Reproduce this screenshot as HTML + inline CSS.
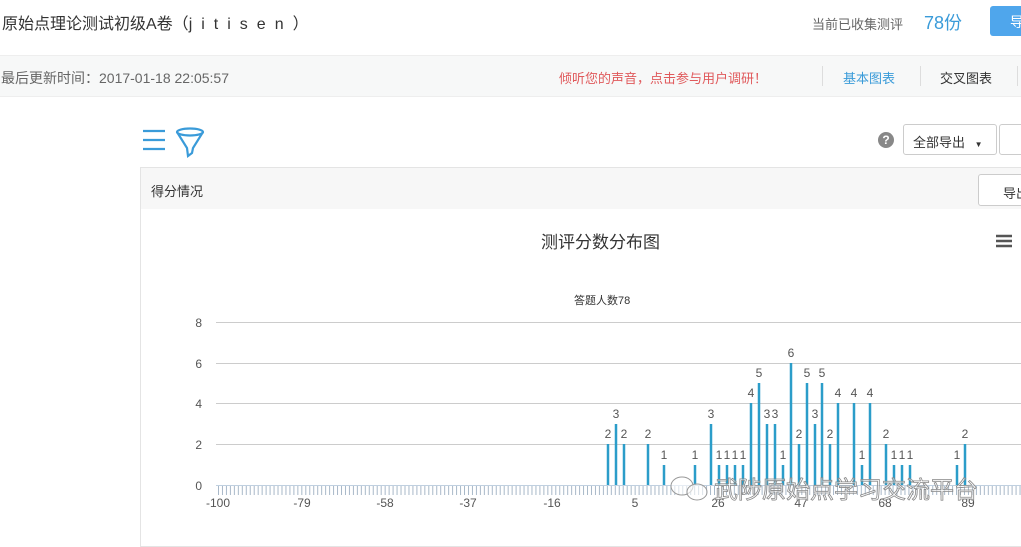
<!DOCTYPE html>
<html><head><meta charset="utf-8"><style>
*{margin:0;padding:0;box-sizing:border-box}
body{width:1021px;height:534px;overflow:hidden;background:#fff;font-family:"Liberation Sans","Noto Sans CJK SC",sans-serif;color:#333;position:relative}
.abs{position:absolute;white-space:nowrap}
</style></head><body>
<div class="abs" style="left:2px;top:10px;font-size:16px;color:#333">原始点理论测试初级A卷（<span style="letter-spacing:9px">jitisen</span>）</div>
<div class="abs" style="left:812px;top:14px;font-size:13px;color:#666">当前已收集测评</div>
<div class="abs" style="left:924px;top:9px;font-size:18px;color:#3a9bd9">78份</div>
<div class="abs" style="left:990px;top:6px;width:40px;height:30px;background:#4fa6ec;border-radius:3px;color:#fff;font-size:14px;padding:6px 0 0 20px">导</div>
<div class="abs" style="left:0;top:55px;width:1021px;height:42px;background:#f7f8f8;border-top:1px solid #eee;border-bottom:1px solid #eee"></div>
<div class="abs" style="left:1px;top:68px;font-size:14px;color:#666">最后更新时间：2017-01-18 22:05:57</div>
<div class="abs" style="left:559px;top:68px;font-size:13px;color:#e0595b">倾听您的声音，点击参与用户调研！</div>
<div class="abs" style="left:822px;top:66px;width:1px;height:20px;background:#ddd"></div>
<div class="abs" style="left:843px;top:68px;font-size:13px;color:#3a9bd9">基本图表</div>
<div class="abs" style="left:920px;top:66px;width:1px;height:20px;background:#ddd"></div>
<div class="abs" style="left:940px;top:68px;font-size:13px;color:#333">交叉图表</div>
<div class="abs" style="left:1017px;top:66px;width:1px;height:20px;background:#ddd"></div>
<svg class="abs" style="left:140px;top:126px" width="70" height="32"><g stroke="#3a9bd9" stroke-width="2.2" fill="none"><line x1="3" y1="5" x2="25" y2="5"/><line x1="3" y1="14" x2="25" y2="14"/><line x1="3" y1="23" x2="25" y2="23"/><ellipse cx="50" cy="6" rx="13" ry="3.5"/><path d="M37 6 L47 22 L48 30 L52 27 L53 22 L63 6"/></g></svg>
<div class="abs" style="left:878px;top:132px;width:16px;height:16px;border-radius:50%;background:#888;color:#fff;font-size:12px;font-weight:bold;text-align:center;line-height:16px">?</div>
<div class="abs" style="left:903px;top:124px;width:94px;height:31px;border:1px solid #ccc;border-radius:3px;font-size:13px;padding:7px 0 0 9px">全部导出 <span style="font-size:8px;margin-left:6px">▼</span></div>
<div class="abs" style="left:999px;top:124px;width:30px;height:31px;border:1px solid #ccc;border-radius:3px"></div>
<div class="abs" style="left:140px;top:167px;width:900px;height:380px;border:1px solid #e4e4e4"></div>
<div class="abs" style="left:141px;top:168px;width:890px;height:41px;background:#f7f7f7"></div>
<div class="abs" style="left:151px;top:181px;font-size:13px;color:#333">得分情况</div>
<div class="abs" style="left:978px;top:174px;width:60px;height:32px;border:1px solid #ccc;border-radius:3px;background:#fff;font-size:13px;padding:8px 0 0 24px">导出</div>
<div class="abs" style="left:541px;top:228px;font-size:17px;color:#333">测评分数分布图</div>
<svg class="abs" style="left:995px;top:234px" width="18" height="14"><g stroke="#555" stroke-width="2.5"><line x1="1" y1="2" x2="17" y2="2"/><line x1="1" y1="7" x2="17" y2="7"/><line x1="1" y1="12" x2="17" y2="12"/></g></svg>
<div class="abs" style="left:574px;top:292px;font-size:11px;color:#333">答题人数78</div>
<svg class="abs" style="left:0;top:0" width="1021" height="534">
<defs><pattern id="tk" x="218" y="0" width="3.968" height="534" patternUnits="userSpaceOnUse"><line x1="0.5" y1="0" x2="0.5" y2="534" stroke="#a8b8c8" stroke-width="1"/></pattern></defs>
<g stroke="#ccc" stroke-width="1"><line x1="216" y1="322.5" x2="1021" y2="322.5"/><line x1="216" y1="363.5" x2="1021" y2="363.5"/><line x1="216" y1="403.5" x2="1021" y2="403.5"/><line x1="216" y1="444.5" x2="1021" y2="444.5"/></g>
<rect x="216" y="485" width="805" height="10" fill="url(#tk)"/>
<line x1="216" y1="485.5" x2="1021" y2="485.5" stroke="#c0d0e0"/>
<g font-size="12" fill="#555" font-family="Liberation Sans,sans-serif" text-anchor="end"><text x="202" y="327">8</text><text x="202" y="368">6</text><text x="202" y="408">4</text><text x="202" y="449">2</text><text x="202" y="490">0</text></g>
<g font-size="12" fill="#555" font-family="Liberation Sans,sans-serif" text-anchor="middle"><text x="218" y="507">-100</text><text x="302" y="507">-79</text><text x="385" y="507">-58</text><text x="468" y="507">-37</text><text x="552" y="507">-16</text><text x="635" y="507">5</text><text x="718" y="507">26</text><text x="801" y="507">47</text><text x="885" y="507">68</text><text x="968" y="507">89</text></g>
<g font-size="12" fill="#555" font-family="Liberation Sans,sans-serif" text-anchor="middle" stroke="none">
<line x1="608" y1="485" x2="608" y2="444" stroke="#2b9dc9" stroke-width="2.5"/><text x="608" y="438">2</text>
<line x1="616" y1="485" x2="616" y2="424" stroke="#2b9dc9" stroke-width="2.5"/><text x="616" y="418">3</text>
<line x1="624" y1="485" x2="624" y2="444" stroke="#2b9dc9" stroke-width="2.5"/><text x="624" y="438">2</text>
<line x1="648" y1="485" x2="648" y2="444" stroke="#2b9dc9" stroke-width="2.5"/><text x="648" y="438">2</text>
<line x1="664" y1="485" x2="664" y2="465" stroke="#2b9dc9" stroke-width="2.5"/><text x="664" y="459">1</text>
<line x1="695" y1="485" x2="695" y2="465" stroke="#2b9dc9" stroke-width="2.5"/><text x="695" y="459">1</text>
<line x1="711" y1="485" x2="711" y2="424" stroke="#2b9dc9" stroke-width="2.5"/><text x="711" y="418">3</text>
<line x1="719" y1="485" x2="719" y2="465" stroke="#2b9dc9" stroke-width="2.5"/><text x="719" y="459">1</text>
<line x1="727" y1="485" x2="727" y2="465" stroke="#2b9dc9" stroke-width="2.5"/><text x="727" y="459">1</text>
<line x1="735" y1="485" x2="735" y2="465" stroke="#2b9dc9" stroke-width="2.5"/><text x="735" y="459">1</text>
<line x1="743" y1="485" x2="743" y2="465" stroke="#2b9dc9" stroke-width="2.5"/><text x="743" y="459">1</text>
<line x1="751" y1="485" x2="751" y2="403" stroke="#2b9dc9" stroke-width="2.5"/><text x="751" y="397">4</text>
<line x1="759" y1="485" x2="759" y2="383" stroke="#2b9dc9" stroke-width="2.5"/><text x="759" y="377">5</text>
<line x1="767" y1="485" x2="767" y2="424" stroke="#2b9dc9" stroke-width="2.5"/><text x="767" y="418">3</text>
<line x1="775" y1="485" x2="775" y2="424" stroke="#2b9dc9" stroke-width="2.5"/><text x="775" y="418">3</text>
<line x1="783" y1="485" x2="783" y2="465" stroke="#2b9dc9" stroke-width="2.5"/><text x="783" y="459">1</text>
<line x1="791" y1="485" x2="791" y2="363" stroke="#2b9dc9" stroke-width="2.5"/><text x="791" y="357">6</text>
<line x1="799" y1="485" x2="799" y2="444" stroke="#2b9dc9" stroke-width="2.5"/><text x="799" y="438">2</text>
<line x1="807" y1="485" x2="807" y2="383" stroke="#2b9dc9" stroke-width="2.5"/><text x="807" y="377">5</text>
<line x1="815" y1="485" x2="815" y2="424" stroke="#2b9dc9" stroke-width="2.5"/><text x="815" y="418">3</text>
<line x1="822" y1="485" x2="822" y2="383" stroke="#2b9dc9" stroke-width="2.5"/><text x="822" y="377">5</text>
<line x1="830" y1="485" x2="830" y2="444" stroke="#2b9dc9" stroke-width="2.5"/><text x="830" y="438">2</text>
<line x1="838" y1="485" x2="838" y2="403" stroke="#2b9dc9" stroke-width="2.5"/><text x="838" y="397">4</text>
<line x1="854" y1="485" x2="854" y2="403" stroke="#2b9dc9" stroke-width="2.5"/><text x="854" y="397">4</text>
<line x1="862" y1="485" x2="862" y2="465" stroke="#2b9dc9" stroke-width="2.5"/><text x="862" y="459">1</text>
<line x1="870" y1="485" x2="870" y2="403" stroke="#2b9dc9" stroke-width="2.5"/><text x="870" y="397">4</text>
<line x1="886" y1="485" x2="886" y2="444" stroke="#2b9dc9" stroke-width="2.5"/><text x="886" y="438">2</text>
<line x1="894" y1="485" x2="894" y2="465" stroke="#2b9dc9" stroke-width="2.5"/><text x="894" y="459">1</text>
<line x1="902" y1="485" x2="902" y2="465" stroke="#2b9dc9" stroke-width="2.5"/><text x="902" y="459">1</text>
<line x1="910" y1="485" x2="910" y2="465" stroke="#2b9dc9" stroke-width="2.5"/><text x="910" y="459">1</text>
<line x1="957" y1="485" x2="957" y2="465" stroke="#2b9dc9" stroke-width="2.5"/><text x="957" y="459">1</text>
<line x1="965" y1="485" x2="965" y2="444" stroke="#2b9dc9" stroke-width="2.5"/><text x="965" y="438">2</text>
</g>
<g fill="rgba(255,255,255,0.6)" stroke="#999" stroke-width="1"><ellipse cx="682" cy="486" rx="11" ry="9"/><ellipse cx="697" cy="492" rx="10" ry="8"/></g>
<text x="714" y="498" font-size="24" fill="rgba(255,255,255,0.5)" stroke="#888" stroke-width="0.8" font-family="Noto Sans CJK SC,sans-serif">武陟原始点学习交流平台</text>
</svg>
</body></html>
